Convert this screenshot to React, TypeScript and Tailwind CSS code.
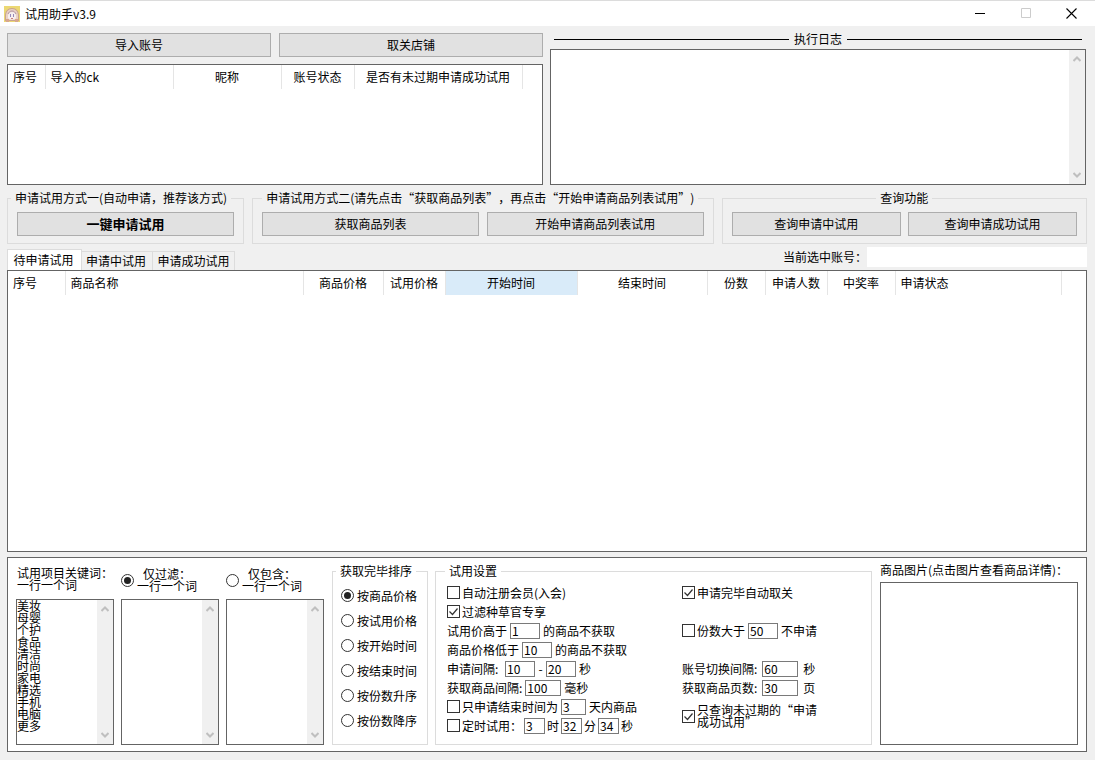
import type { ReactNode } from 'react';

type Column = { title: string; width: string; align?: string; active?: boolean };

const accountColumns: Column[] = [
  { title: '序号', width: 'w-[37px]' },
  { title: '导入的ck', width: 'w-[128px]' },
  { title: '昵称', width: 'w-[108px]', align: 'text-center' },
  { title: '账号状态', width: 'w-[73px]', align: 'text-center' },
  { title: '是否有未过期申请成功试用', width: 'w-[168px]', align: 'text-center' },
];

const goodsColumns: Column[] = [
  { title: '序号', width: 'w-[57px]' },
  { title: '商品名称', width: 'w-[238px]' },
  { title: '商品价格', width: 'w-[80px]', align: 'text-center' },
  { title: '试用价格', width: 'w-[62px]', align: 'text-center' },
  { title: '开始时间', width: 'w-[132px]', align: 'text-center', active: true },
  { title: '结束时间', width: 'w-[130px]', align: 'text-center' },
  { title: '份数', width: 'w-[58px]', align: 'text-center' },
  { title: '申请人数', width: 'w-[62px]', align: 'text-center' },
  { title: '中奖率', width: 'w-[68px]', align: 'text-center' },
  { title: '申请状态', width: 'w-[166px]' },
];

const keywords = [
  '美妆',
  '母婴',
  '个护',
  '食品',
  '清洁',
  '时尚',
  '家电',
  '精选',
  '手机',
  '电脑',
  '更多',
];

const sortOptions = [
  '按商品价格',
  '按试用价格',
  '按开始时间',
  '按结束时间',
  '按份数升序',
  '按份数降序',
];

function AppIcon() {
  return (
    <svg width="16" height="16" viewBox="0 0 16 16" aria-hidden="true">
      <rect width="16" height="16" fill="#ecd873" />
      <path d="M1 15V10c0-5 3-8 7-8s7 3 7 8v5z" fill="#c9a48f" />
      <path d="M2 14v-4c0-4 2-7 6-7s6 3 6 7v4z" fill="#ead2c4" />
      <path d="M4 9c1-4 7-4 8 0v3c-1 2-7 2-8 0z" fill="#f6eeee" />
      <path d="M4 8c1-2 2-3 4-3s3 1 4 3" fill="none" stroke="#b093a6" />
      <path d="M6 8h1v3H6zM9 8h1v3H9z" fill="#9488b8" />
      <path d="M7 12h2v1H7z" fill="#c9827f" />
      <path d="M2 13h3v3H2zM11 13h3v3h-3z" fill="#d8a68e" />
    </svg>
  );
}

function TitleBar() {
  return (
    <header className="flex h-[26px] items-center border-t border-[#dcdcdc] bg-white pl-1 pr-px">
      <AppIcon />
      <h1 className="ml-[5px] flex-1 text-xs font-normal leading-4">试用助手v3.9</h1>
      <button type="button" aria-label="最小化" className="flex h-6 w-[45px] items-center justify-center">
        <svg width="11" height="11" viewBox="0 0 11 11" stroke="#000">
          <path d="M0 5.5h10" />
        </svg>
      </button>
      <button type="button" aria-label="最大化" disabled className="flex h-6 w-[46px] items-center justify-center">
        <svg width="11" height="11" viewBox="0 0 11 11" fill="none" stroke="#ccc">
          <path d="M.5 .5h9v9h-9z" />
        </svg>
      </button>
      <button type="button" aria-label="关闭" className="flex h-6 w-[45px] items-center justify-center">
        <svg width="11" height="11" viewBox="0 0 11 11" stroke="#000" strokeWidth="1.1">
          <path d="M.5 .5l10 10M10.5 .5l-10 10" />
        </svg>
      </button>
    </header>
  );
}

function Button({ children, bold }: { children: ReactNode; bold?: boolean }) {
  return (
    <button
      type="button"
      className={`h-6 min-w-0 flex-1 border border-[#adadad] bg-[#e1e1e1] leading-4 hover:border-[#0078d7] hover:bg-[#e5f1fb] ${
        bold ? 'text-[13px] font-bold' : 'text-xs'
      }`}
    >
      {children}
    </button>
  );
}

function DataTable({ columns }: { columns: Column[] }) {
  return (
    <table className="w-full table-fixed border-collapse">
      <thead>
        <tr className="h-6">
          {columns.map(({ title, width, align = 'text-left', active }) => (
            <th
              key={title}
              className={`${width} ${align} whitespace-nowrap border-r border-[#e5e5e5] p-0 px-[5px] font-normal ${
                active ? 'bg-[#d9ebf9]' : ''
              }`}
            >
              {title}
            </th>
          ))}
          <td />
        </tr>
      </thead>
    </table>
  );
}

function ScrollBar() {
  return (
    <div className="flex w-4 shrink-0 flex-col items-center justify-between bg-[#f0f0f0] py-[6px]" aria-hidden="true">
      <svg width="8" height="6" viewBox="0 0 8 6" fill="none" stroke="#bfbfbf" strokeWidth="2">
        <path d="M.5 5L4 1.500 7.500 5" />
      </svg>
      <svg width="8" height="6" viewBox="0 0 8 6" fill="none" stroke="#bfbfbf" strokeWidth="2">
        <path d="M.5 1L4 4.500 7.500 1" />
      </svg>
    </div>
  );
}

function TextBox({ label, value = '' }: { label: string; value?: string }) {
  return (
    <div className="flex min-h-0 flex-1 border border-[#646464] bg-white">
      <textarea
        aria-label={label}
        defaultValue={value}
        className="w-0 min-w-0 flex-1 resize-none overflow-hidden leading-3 outline-none"
      />
      <ScrollBar />
    </div>
  );
}

function Group({
  title,
  className = '',
  legend = '',
  children,
}: {
  title: string;
  className?: string;
  legend?: string;
  children: ReactNode;
}) {
  return (
    <fieldset className={`min-w-0 border border-[#dcdcdc] ${className}`}>
      <legend className={`whitespace-nowrap px-1 leading-3 ${legend}`}>{title}</legend>
      {children}
    </fieldset>
  );
}

function Radio({ name, checked, children }: { name: string; checked?: boolean; children: ReactNode }) {
  return (
    <label className="flex items-center gap-[3px]">
      <span className="relative flex">
        <input
          type="radio"
          name={name}
          defaultChecked={checked}
          className="peer h-[13px] w-[13px] appearance-none rounded-full border border-[#333] bg-white"
        />
        <span className="absolute left-[3px] top-[3px] hidden h-[7px] w-[7px] rounded-full bg-[#222] peer-checked:block" />
      </span>
      {children}
    </label>
  );
}

function Check({ checked, children }: { checked?: boolean; children: ReactNode }) {
  return (
    <label className="flex items-center gap-[2px]">
      <span className="relative flex">
        <input
          type="checkbox"
          defaultChecked={checked}
          className="peer h-[13px] w-[13px] appearance-none border border-[#333] bg-white"
        />
        <svg
          className="pointer-events-none absolute left-0 top-0 hidden peer-checked:block"
          width="13"
          height="13"
          viewBox="0 0 13 13"
          fill="none"
          stroke="#333"
          strokeWidth="1.2"
        >
          <path d="M2.500 6.500l3 3 5-6" />
        </svg>
      </span>
      {children}
    </label>
  );
}

function Field({ label, value, width = 'w-[30px]' }: { label: string; value: string; width?: string }) {
  return (
    <input
      type="text"
      aria-label={label}
      defaultValue={value}
      className={`h-4 border border-[#7a7a7a] bg-white px-px leading-3 outline-none ${width}`}
    />
  );
}

function KeywordPanels() {
  return (
    <div className="grid w-[308px] grid-cols-3 gap-[7px] whitespace-nowrap">
      <div className="flex min-w-0 flex-col">
        <p className="h-[32px] pl-px leading-3">
          试用项目关键词：
          <br />
          一行一个词
        </p>
        <TextBox label="试用项目关键词" value={keywords.join('\n')} />
      </div>
      <div className="flex min-w-0 flex-col">
        <div className="flex h-[32px] items-start pt-px">
          <Radio name="keyword-mode" checked>
            <span className="text-center leading-3">
              仅过滤：
              <br />
              一行一个词
            </span>
          </Radio>
        </div>
        <TextBox label="仅过滤" />
      </div>
      <div className="flex min-w-0 flex-col">
        <div className="flex h-[32px] items-start pt-px">
          <Radio name="keyword-mode">
            <span className="text-center leading-3">
              仅包含：
              <br />
              一行一个词
            </span>
          </Radio>
        </div>
        <TextBox label="仅包含" />
      </div>
    </div>
  );
}

function Settings() {
  return (
    <Group title="试用设置" className="flex-1 pl-[11px]" legend="-ml-[2px]">
      <div className="mt-[6px] grid grid-cols-[235px_1fr] grid-rows-[repeat(8,19px)] whitespace-nowrap">
        <Check>自动注册会员(入会)</Check>
        <Check checked>申请完毕自动取关</Check>

        <Check checked>过滤种草官专享</Check>
        <span />

        <div className="flex items-center gap-[3px]">
          试用价高于
          <Field label="试用价高于" value="1" />
          的商品不获取
        </div>
        <div className="flex items-center gap-[3px]">
          <Check>份数大于</Check>
          <Field label="份数大于" value="50" />
          不申请
        </div>

        <div className="flex items-center gap-[3px]">
          商品价格低于
          <Field label="商品价格低于" value="10" />
          的商品不获取
        </div>
        <span />

        <div className="flex items-center gap-[3px]">
          <span className="w-[55px]">申请间隔:</span>
          <Field label="最小申请间隔" value="10" />
          <span className="w-[5px] text-center">-</span>
          <Field label="最大申请间隔" value="20" />
          秒
        </div>
        <div className="flex items-center gap-[5px]">
          账号切换间隔:
          <Field label="账号切换间隔" value="60" width="w-[36px]" />
          秒
        </div>

        <div className="flex items-center gap-[3px]">
          获取商品间隔:
          <Field label="获取商品间隔" value="100" width="w-[36px]" />
          毫秒
        </div>
        <div className="flex items-center gap-[5px]">
          获取商品页数:
          <Field label="获取商品页数" value="30" width="w-[36px]" />
          页
        </div>

        <div className="flex items-center gap-[3px]">
          <Check>只申请结束时间为</Check>
          <Field label="结束天数" value="3" width="w-[25px]" />
          天内商品
        </div>
        <div className="row-span-2 flex items-center">
          <Check checked>
            <span className="leading-3">
              只查询未过期的“申请
              <br />
              成功试用”
            </span>
          </Check>
        </div>

        <div className="flex items-center gap-[2px]">
          <Check>定时试用：</Check>
          <Field label="时" value="3" width="w-[21px]" />
          时
          <Field label="分" value="32" width="w-[21px]" />
          分
          <Field label="秒" value="34" width="w-[21px]" />
          秒
        </div>
      </div>
    </Group>
  );
}

function App() {
  return (
    <div
      lang="zh-CN"
      className="flex min-h-screen flex-col bg-[#f0f0f0] font-['Noto_Sans_CJK_SC',sans-serif] text-xs text-black [text-spacing-trim:space-all]"
    >
      <TitleBar />
      <main className="flex flex-1 flex-col pb-2 pl-[7px] pr-2">
        <div className="mr-px mt-[7px] grid h-[152px] grid-cols-2 gap-[7px]">
          <section className="flex flex-col">
            <div className="flex gap-2">
              <Button>导入账号</Button>
              <Button>取关店铺</Button>
            </div>
            <div className="mt-[7px] flex-1 border border-[#646464] bg-white">
              <DataTable columns={accountColumns} />
            </div>
          </section>
          <section className="flex flex-col">
            <div className="mb-1 flex h-3 items-center gap-[5px] px-1 leading-3">
              <span className="h-px flex-1 bg-black" />
              执行日志
              <span className="h-px flex-1 bg-black" />
            </div>
            <TextBox label="执行日志" />
          </section>
        </div>

        <div className="mt-[7px] grid grid-cols-[237fr_461fr_365fr] gap-2">
          <Group title="申请试用方式一(自动申请，推荐该方式)" className="px-[9px] pb-[7px]" legend="-ml-[6px]">
            <div className="mt-2 flex">
              <Button bold>一键申请试用</Button>
            </div>
          </Group>
          <Group
            title="申请试用方式二(请先点击“获取商品列表”，再点击“开始申请商品列表试用”)"
            className="px-[9px] pb-[7px]"
          >
            <div className="mt-2 flex gap-2">
              <Button>获取商品列表</Button>
              <Button>开始申请商品列表试用</Button>
            </div>
          </Group>
          <Group title="查询功能" className="px-[9px] pb-[7px]" legend="mx-auto">
            <div className="mt-2 flex gap-[7px]">
              <Button>查询申请中试用</Button>
              <Button>查询申请成功试用</Button>
            </div>
          </Group>
        </div>

        <div className="mt-[3px] flex h-[23px] items-end">
          <button
            type="button"
            className="h-[21px] w-[75px] border border-b-0 border-[#dcdcdc] bg-white pr-[2px] leading-4"
          >
            待申请试用
          </button>
          <button type="button" className="h-[19px] w-[71px] border-r border-t border-[#dcdcdc] pr-[2px] leading-4">
            申请中试用
          </button>
          <button type="button" className="h-[19px] w-[82px] border-r border-t border-[#dcdcdc] leading-4">
            申请成功试用
          </button>
          <label className="mb-[3px] ml-auto flex items-center">
            当前选中账号：
            <input type="text" readOnly className="h-5 w-[220px] bg-white outline-none" />
          </label>
        </div>
        <div className="min-h-[200px] flex-1 border border-[#646464] bg-white">
          <DataTable columns={goodsColumns} />
        </div>

        <div className="mt-[5px] flex h-[195px] border border-[#646464] bg-white pb-[6px] pl-2 pr-2">
          <div className="flex pt-[9px]">
            <KeywordPanels />
          </div>
          <div className="ml-2 flex pt-[7px]">
            <Group title="获取完毕排序" className="w-24 pl-2" legend="-ml-[5px]">
              <div className="mt-[6px] flex flex-col">
                {sortOptions.map((option, index) => (
                  <div key={option} className="flex h-[25px] items-center">
                    <Radio name="sort" checked={index === 0}>
                      {option}
                    </Radio>
                  </div>
                ))}
              </div>
            </Group>
          </div>
          <div className="ml-[7px] flex flex-1 pt-[7px]">
            <Settings />
          </div>
          <section className="ml-2 flex w-[198px] flex-col pt-[6px]">
            <h2 className="mb-[6px] whitespace-nowrap leading-3">商品图片(点击图片查看商品详情)：</h2>
            <div className="flex-1 border border-[#646464]" />
          </section>
        </div>
      </main>
    </div>
  );
}

export default App;
